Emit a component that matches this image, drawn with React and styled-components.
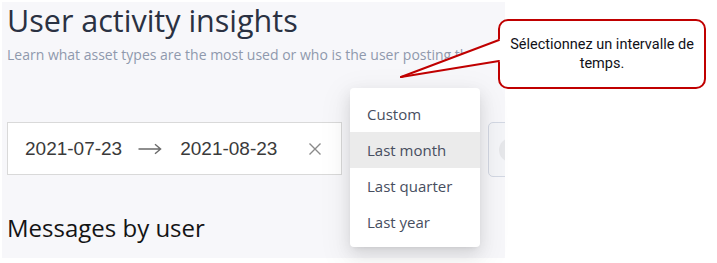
import React from "react";
import styled, { createGlobalStyle } from "styled-components";

const Global = createGlobalStyle`
  html, body { margin: 0; padding: 0; background: #ffffff; }
  body { font-family: "Open Sans", sans-serif; }
`;

const Stage = styled.div`
  position: relative;
  width: 717px;
  height: 263px;
  overflow: hidden;
`;

const Panel = styled.section`
  margin: 2px 0 0 2px;
  width: 503px;
  height: 256px;
  box-sizing: border-box;
  padding: 0 0 0 5px;
  background: #f7f7fa;
  overflow: hidden;
  display: flex;
  flex-direction: column;
`;

const Title = styled.h1`
  margin: 0;
  font-family: "Open Sans", sans-serif;
  font-weight: 400;
  font-size: 30.5px;
  line-height: 36px;
  color: #2a3142;
  white-space: nowrap;
`;

const Subtitle = styled.p`
  margin: 7px 0 0;
  font-family: "Open Sans", sans-serif;
  font-size: 14px;
  line-height: 20px;
  color: #8f99ad;
  white-space: nowrap;
  overflow: hidden;
`;

const FilterRow = styled.div`
  margin-top: 57px;
  display: flex;
  align-items: flex-start;
`;

const RangeBox = styled.div`
  width: 335px;
  height: 53px;
  flex-shrink: 0;
  box-sizing: border-box;
  border: 1px solid #d9d9d9;
  background: #ffffff;
  display: flex;
  align-items: center;
  padding: 0 0 0 17px;
  font-family: "Liberation Sans", Arial, sans-serif;
  font-size: 19px;
  color: #3a3a3a;
  white-space: nowrap;
`;

const DateText = styled.span`
  line-height: 24px;
  flex-shrink: 0;
`;

const ArrowWrap = styled.span`
  display: flex;
  margin: 0 18px 0 16px;
`;

const ClearWrap = styled.span`
  display: flex;
  margin-left: 31px;
`;

const GroupBox = styled.div`
  margin-left: 146px;
  width: 60px;
  height: 55px;
  box-sizing: border-box;
  border: 1px solid #d3d8e3;
  border-radius: 5px;
  background: #f4f5f8;
  display: flex;
  align-items: center;
  padding-left: 10px;
  flex-shrink: 0;
`;

const Dot = styled.span`
  width: 24px;
  height: 24px;
  border-radius: 50%;
  background: #e6e7ea;
`;

const Section = styled.h2`
  margin: 35px 0 0;
  font-family: "Open Sans", sans-serif;
  font-weight: 400;
  font-size: 24px;
  line-height: 32px;
  color: #141414;
`;

const Menu = styled.ul`
  position: absolute;
  left: 350px;
  top: 88px;
  width: 130px;
  margin: 0;
  padding: 8px 0 7px;
  list-style: none;
  background: #ffffff;
  border-radius: 4px;
  box-shadow: 0 3px 6px -4px rgba(0, 0, 0, 0.14), 0 6px 16px 0 rgba(0, 0, 0, 0.1),
    0 9px 28px 8px rgba(0, 0, 0, 0.05);
`;

const MenuItem = styled.li`
  height: 36px;
  padding: 0 17px;
  display: flex;
  align-items: center;
  font-family: "Open Sans", sans-serif;
  font-size: 15px;
  color: #474e60;
  background: ${(p) => (p.$active ? "#ebebeb" : "transparent")};
`;

const Callout = styled.div`
  position: absolute;
  left: 498px;
  top: 19px;
  width: 208px;
  height: 70px;
  box-sizing: border-box;
  border: 2px solid #c00000;
  border-radius: 10px;
  background: #ffffff;
  display: flex;
  align-items: center;
  justify-content: center;
  text-align: center;
  padding: 0 4px;
  font-family: Roboto, "Liberation Sans", sans-serif;
  font-size: 14.5px;
  line-height: 19px;
  color: #111118;
`;

const Pointer = styled.svg`
  position: absolute;
  left: 398px;
  top: 36px;
  overflow: visible;
`;

const Arrow = () => (
  <svg width="24" height="12" viewBox="0 0 24 12">
    <path d="M0.5 6H22.5M17 1.2L22.6 6L17 10.8" fill="none" stroke="#6a6a6a" strokeWidth="1.4" />
  </svg>
);

const Clear = () => (
  <svg width="14" height="14" viewBox="0 0 14 14">
    <path d="M1.5 1.5L12.5 12.5M12.5 1.5L1.5 12.5" fill="none" stroke="#8a8a8a" strokeWidth="1.4" />
  </svg>
);

export default function App() {
  return (
    <Stage>
      <Global />
      <Panel>
        <Title>User activity insights</Title>
        <Subtitle>
          Learn what asset types are the most used or who is the user posting the most messages.
        </Subtitle>
        <FilterRow>
          <RangeBox>
            <DateText>2021-07-23</DateText>
            <ArrowWrap>
              <Arrow />
            </ArrowWrap>
            <DateText>2021-08-23</DateText>
            <ClearWrap>
              <Clear />
            </ClearWrap>
          </RangeBox>
          <GroupBox>
            <Dot />
          </GroupBox>
        </FilterRow>
        <Section>Messages by user</Section>
      </Panel>

      <Menu>
        <MenuItem>Custom</MenuItem>
        <MenuItem $active>Last month</MenuItem>
        <MenuItem>Last quarter</MenuItem>
        <MenuItem>Last year</MenuItem>
      </Menu>

      <Callout>Sélectionnez un intervalle de temps.</Callout>
      <Pointer width="104" height="44" viewBox="0 0 104 44">
        <polygon points="3,41 101,3 104,3 104,26 101,26" fill="#ffffff" />
        <line x1="3" y1="41" x2="101" y2="4" stroke="#c00000" strokeWidth="2" strokeLinecap="round" />
        <line x1="3" y1="41" x2="101" y2="25" stroke="#c00000" strokeWidth="2" strokeLinecap="round" />
      </Pointer>
    </Stage>
  );
}
